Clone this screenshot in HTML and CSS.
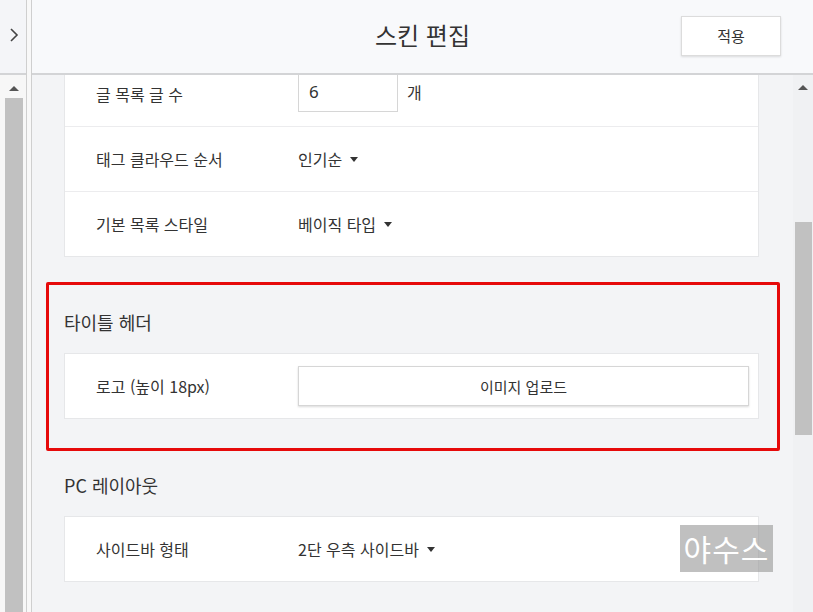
FILE: index.html
```html
<!DOCTYPE html>
<html lang="ko">
<head>
<meta charset="utf-8">
<link rel="stylesheet" href="styles.css">
</head>
<body>
<div class="app">
  <aside class="side">
    <div class="side-head">
      <svg class="chev" width="10" height="16" viewBox="0 0 10 16"><polyline points="2,2 8,8 2,14" fill="none" stroke="#444" stroke-width="1.6"/></svg>
    </div>
    <div class="side-scroll">
      <span class="arrow-up"></span>
      <div class="side-thumb"></div>
    </div>
  </aside>
  <div class="sep"></div>
  <main class="main">
    <header class="head">
      <div></div>
      <h1 class="title">스킨 편집</h1>
      <button class="apply">적용</button>
    </header>
    <div class="body">
      <div class="content">
        <div class="card first">
          <div class="row">
            <span class="label">글 목록 글 수</span>
            <span class="value"><span class="input">6</span><span class="unit">개</span></span>
          </div>
          <div class="row">
            <span class="label">태그 클라우드 순서</span>
            <span class="value">인기순 <i class="caret"></i></span>
          </div>
          <div class="row">
            <span class="label">기본 목록 스타일</span>
            <span class="value">베이직 타입 <i class="caret"></i></span>
          </div>
        </div>
        <section class="sect highlight">
          <h2 class="sect-title">타이틀 헤더</h2>
          <div class="card">
            <div class="row">
              <span class="label">로고 (높이 18px)</span>
              <span class="value grow"><button class="upload">이미지 업로드</button></span>
            </div>
          </div>
        </section>
        <section class="sect next">
          <h2 class="sect-title">PC 레이아웃</h2>
          <div class="card">
            <div class="row">
              <span class="label">사이드바 형태</span>
              <span class="value">2단 우측 사이드바 <i class="caret"></i></span>
            </div>
          </div>
        </section>
      </div>
      <div class="vscroll">
        <span class="arrow-up"></span>
        <div class="vthumb"></div>
      </div>
    </div>
  </main>
</div>
<div class="watermark">야수스</div>
</body>
</html>
```
FILE: styles.css
```css
* { box-sizing: border-box; }
html, body { margin: 0; padding: 0; }
body {
  width: 813px;
  height: 612px;
  overflow: hidden;
  font-family: "Noto Sans CJK KR", "Noto Sans", sans-serif;
  color: #333;
  background: #f3f4f6;
  position: relative;
}
.app { display: flex; height: 612px; }

/* left strip */
.side { width: 26px; display: flex; flex-direction: column; background: #fafafa; }
.side-head {
  height: 75px;
  background: #f4f5f8;
  border-bottom: 2px solid #d3d4d6;
  display: flex; align-items: center; justify-content: center;
}
.chev { margin-top: -4px; margin-left: 1px; }
.side-scroll { flex: 1; display: flex; flex-direction: column; align-items: center; padding-top: 11px; background: #f7f7f7; padding-left: 4px; }
.side-scroll .arrow-up { margin-right: 2px; }
.side-thumb { width: 18px; flex: 1; background: #c1c1c1; margin-top: 7px; margin-right: 2px; }
.arrow-up {
  width: 0; height: 0;
  border-left: 5px solid transparent;
  border-right: 5px solid transparent;
  border-bottom: 5px solid #555;
}

.sep { width: 6px; border-left: 1px solid #cfcfcf; border-right: 1px solid #cfcfcf; background: #f8f8f8; }

/* main */
.main { flex: 1; display: flex; flex-direction: column; min-width: 0; }
.head {
  height: 75px;
  flex: none;
  background: #f8f9fb;
  border-bottom: 2px solid #d3d4d6;
  display: grid;
  grid-template-columns: 1fr auto 1fr;
  align-items: center;
  position: relative;
  z-index: 2;
}
.title { margin: 0; font-size: 24px; font-weight: 400; color: #333; padding-bottom: 4px; }
.apply {
  justify-self: end;
  margin-right: 32px;
  margin-bottom: 2px;
  width: 100px; height: 40px;
  background: #fff;
  border: 1px solid #dcdcdc;
  box-shadow: 0 1px 2px rgba(0,0,0,0.12);
  font-family: inherit;
  font-size: 15px;
  color: #333;
}

.body { flex: 1; display: flex; min-height: 0; overflow: hidden; }
.content { flex: 1; padding: 0 34px 0 32px; background: #f3f4f6; }
.vscroll { width: 20px; background: #f0f1f3; display: flex; flex-direction: column; align-items: center; padding-top: 10px; }
.vthumb { width: 17px; height: 213px; background: #c1c1c1; margin-top: 132px; }

.card { background: #fff; border: 1px solid #e6e7e9; }
.card.first { margin-top: -14px; border-top: none; }
.row {
  height: 64px;
  display: flex; align-items: center;
  padding-left: 31px;
  font-size: 16px;
}
.card.first .row { height: 65px; }
.card .row + .row { border-top: 1px solid #ececee; }
.label { width: 202px; flex: none; color: #333; }
.value { display: flex; align-items: center; gap: 6px; }
.value.grow { flex: 1; padding-right: 9px; }
.input {
  width: 100px; height: 40px;
  border: 1px solid #d6d6d6;
  display: flex; align-items: center;
  padding-left: 10px;
  font-family: "Noto Sans", sans-serif;
  font-size: 17px;
  margin-top: -4px;
}
.unit { margin-left: 3px; margin-top: -4px; }
.caret {
  display: inline-block; width: 0; height: 0;
  border-left: 4px solid transparent;
  border-right: 4px solid transparent;
  border-top: 5px solid #333;
  margin-left: 2px;
}
.upload {
  flex: 1;
  height: 40px;
  background: #fff;
  border: 1px solid #d6d6d6;
  box-shadow: 0 1px 2px rgba(0,0,0,0.15);
  font-family: inherit;
  font-size: 15px;
  color: #333;
}

.sect { padding-top: 23px; }
.sect.next { padding-top: 21px; }
.sect-title { margin: 0 0 18px; font-size: 18px; font-weight: 400; line-height: 26px; color: #333; }
.sect.highlight {
  margin: 25px -21px 0 -18px;
  padding: 24px 18px 29px 15px;
  border: 3px solid #e60a0a;
  border-radius: 2px;
}

.watermark {
  position: absolute;
  left: 680px; top: 525px;
  width: 93px; height: 47px;
  background: rgba(150,150,150,0.6);
  color: #fff;
  font-size: 30px;
  line-height: 47px;
  text-align: center;
  letter-spacing: 1px;
}
```
